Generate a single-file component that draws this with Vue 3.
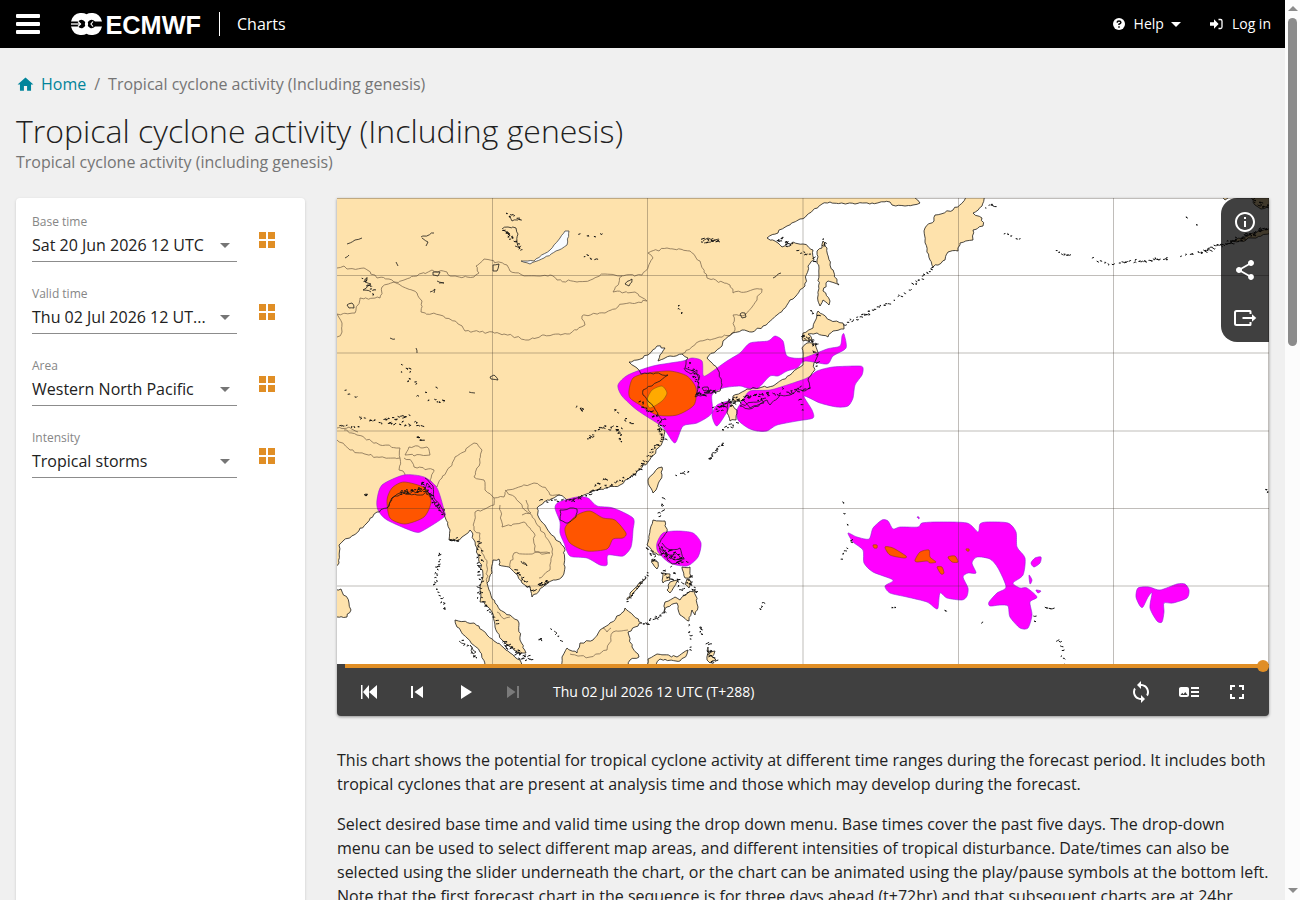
<template>
  <div class="page">
    <div class="main-column">
      <header class="topbar">
        <div class="burger"><i></i><i></i><i></i></div>
        <svg class="logo" viewBox="0 0 131 24">
          <path d="M9 1Q13 .6 15.500 2.200Q18 .6 22 1Q29 1.500 31 9.500H24Q21.500 6.800 18.800 8.300L16.800 10Q17.500 12 16.800 14L18.800 15.700Q21.500 17.200 24 14.500H31Q29 22.500 22 23Q18 23.400 15.500 21.800Q13 23.400 9 23Q2 22.500 0 14.500H7Q9.500 17.200 12.200 15.700L14.200 14Q13.500 12 14.200 10L12.200 8.300Q9.500 6.800 7 9.500H0Q2 1.500 9 1z" fill="#fff" />
          <path d="M0 12h9.500" stroke="#fff" stroke-width="1.300" />
          <path d="M7 9.500L9.500 12 7 14.500M22 9.500L20 12 22 14.500" stroke="#fff" stroke-width="1.200" fill="none" />
          <text x="34.500" y="21.500" textLength="95.500" lengthAdjust="spacingAndGlyphs">ECMWF</text>
        </svg>
        <span class="divider"></span>
        <span class="app-name">Charts</span>
        <div class="spacer"></div>
        <svg class="help-icon" viewBox="0 0 12 12">
          <circle cx="6" cy="6" r="6" fill="#fff" />
          <path d="M4.100 4.600Q4.200 2.900 6 2.900T7.900 4.500Q7.900 5.500 6 6.300V7.100M6 8.200v1.500" fill="none" stroke="#000" stroke-width="1.500" />
        </svg>
        <span class="top-link">Help</span>
        <span class="caret light"></span>
        <svg class="login-icon" viewBox="0 0 13 12">
          <path d="M0 4.200h4V1.200L8.600 6 4 10.800v-3H0z" fill="#fff" />
          <path d="M8.500 1.500h2q1.500 0 1.500 1.500v6q0 1.500-1.500 1.500h-2" fill="none" stroke="#fff" stroke-width="1.300" />
        </svg>
        <span class="top-link">Log in</span>
      </header>

      <nav class="breadcrumb">
        <svg viewBox="0 0 24 24"><path d="M10 20v-6h4v6h5v-8h3L12 3 2 12h3v8z" fill="#00849b" /></svg>
        <a>Home</a><span class="slash">/</span><span>Tropical cyclone activity (Including genesis)</span>
      </nav>
      <h1>Tropical cyclone activity (Including genesis)</h1>
      <p class="subtitle">Tropical cyclone activity (including genesis)</p>

      <div class="content">
        <aside class="filters">
          <div v-for="field in fields" :key="field.label" class="field">
            <div class="select">
              <label>{{ field.label }}</label>
              <div class="value"><span>{{ field.value }}</span><i class="caret"></i></div>
            </div>
            <div class="tiles"><i></i><i></i><i></i><i></i></div>
          </div>
        </aside>

        <section class="chart">
          <div class="viewer">
            <svg class="map" viewBox="0 0 932 466">
              <rect width="932" height="466" fill="#fff" />
              <path class="land" :d="landPath" />
              <path class="water" :d="waterPath" />
              <path class="border" :d="borderPath" />
              <path class="low" :d="lowPath" />
              <path class="mid" :d="midPath" />
              <path class="high" :d="highPath" />
              <path class="coast" :d="landPath" />
              <path class="coast" :d="insetPath" />
              <path class="specks" :d="speckPath" />
              <path class="grid" d="M155.500 0V466M310.500 0V466M466 0V466M621.500 0V466M776.500 0V466M931.500 0V466M0 .5H932M0 77.500H932M0 155H932M0 233H932M0 310.500H932M0 388H932" />
            </svg>
            <div class="map-tools">
              <svg v-for="(icon, i) in mapIcons" :key="i" viewBox="0 0 24 24"><path :d="icon" /></svg>
              <svg viewBox="0 0 24 24">
                <path d="M17.500 8V5.500Q17.500 5 17 5H3.500Q2 5 2 6.500V17.500Q2 19 3.500 19H17q.5 0 .5-.5V16M9.500 12H20" fill="none" stroke="#fff" stroke-width="2" />
                <path d="M19 8.300L23.300 12 19 15.700z" />
              </svg>
            </div>
            <div class="slider"><span class="knob"></span></div>
            <div class="player">
              <svg v-for="(icon, i) in playIcons" :key="i" :class="{ disabled: i === 3 }" viewBox="0 0 24 24"><path :d="icon" /></svg>
              <span class="step">Thu 02 Jul 2026 12 UTC (T+288)</span>
              <div class="spacer"></div>
              <svg v-for="(icon, i) in viewIcons" :key="'v' + i" viewBox="0 0 24 24"><path :d="icon" /></svg>
            </div>
          </div>
          <p>This chart shows the potential for tropical cyclone activity at different time ranges during the forecast period. It includes both tropical cyclones that are present at analysis time and those which may develop during the forecast.</p>
          <p>Select desired base time and valid time using the drop down menu. Base times cover the past five days. The drop-down menu can be used to select different map areas, and different intensities of tropical disturbance. Date/times can also be selected using the slider underneath the chart, or the chart can be animated using the play/pause symbols at the bottom left. Note that the first forecast chart in the sequence is for three days ahead (t+72hr) and that subsequent charts are at 24hr</p>
        </section>
      </div>
    </div>
    <div class="scrollbar"><i class="up"></i><i class="thumb"></i><i class="down"></i></div>
  </div>
</template>

<script setup>
const fields = [
  { label: 'Base time', value: 'Sat 20 Jun 2026 12 UTC' },
  { label: 'Valid time', value: 'Thu 02 Jul 2026 12 UT...' },
  { label: 'Area', value: 'Western North Pacific' },
  { label: 'Intensity', value: 'Tropical storms' }
];

const mapIcons = [
  'M11 7h2v2h-2zm0 4h2v6h-2zm1-9C6.480 2 2 6.480 2 12s4.480 10 10 10 10-4.480 10-10S17.520 2 12 2zm0 18c-4.410 0-8-3.590-8-8s3.590-8 8-8 8 3.590 8 8-3.590 8-8 8z',
  'M18 16.080c-.76 0-1.440.3-1.960.77L8.910 12.700c.05-.23.09-.46.09-.7s-.04-.47-.09-.7l7.050-4.110c.54.5 1.250.81 2.040.81 1.660 0 3-1.340 3-3s-1.340-3-3-3-3 1.340-3 3c0 .24.04.47.09.7L8.040 9.810C7.500 9.310 6.790 9 6 9c-1.660 0-3 1.340-3 3s1.340 3 3 3c.79 0 1.500-.31 2.040-.81l7.120 4.160c-.05.21-.08.43-.08.65 0 1.610 1.310 2.920 2.920 2.920s2.920-1.310 2.920-2.920-1.310-2.920-2.920-2.920z'
];
const playIcons = [
  'M4 5h1.500v14H4zM12 5v14l-6-7zM20 5v14l-8-7z',
  'M6 6h2v12H6zm3.500 6l8.500 6V6z',
  'M8 5v14l11-7z',
  'M6 18l8.500-6L6 6v12zM16 6v12h2V6h-2z'
];
const viewIcons = [
  'M12 4V1L8 5l4 4V6c3.310 0 6 2.690 6 6 0 1.010-.25 1.970-.7 2.800l1.460 1.460C19.540 15.030 20 13.570 20 12c0-4.420-3.580-8-8-8zm0 14c-3.310 0-6-2.690-6-6 0-1.010.25-1.970.7-2.800L5.240 7.740C4.460 8.970 4 10.430 4 12c0 4.420 3.580 8 8 8v3l4-4-4-4v3z',
  'M22 13h-8v-2h8v2zm0-6h-8v2h8V7zm-8 10h8v-2h-8v2zm-2-8v6c0 1.100-.9 2-2 2H4c-1.100 0-2-.9-2-2V9c0-1.100.9-2 2-2h6c1.100 0 2 .9 2 2zm-1.500 6l-2.250-3-1.750 2.260-1.250-1.510L3.500 15h7z',
  'M7 14H5v5h5v-2H7v-3zm-2-4h2V7h3V5H5v5zm12 7h-3v2h5v-5h-2v3zM14 5v2h3v3h2V5h-5z'
];

// Outlines are lists of "x,y" points in map pixels
const land = [
  '-4,-4 578,-4 578,0 583,5 576,7 568,8 555,7 553,4 535,5 518,6 493,4 485,6 470,17 450,28 430,40 441,45 445,49 453,48 456,44 466,46 476,52 477,62 471,68 468,88 456,101 440,117 426,128 415,134 405,132 395,135 386,143 385,148 370,160 381,172 385,187 383,193 366,197 358,199 361,188 362,177 353,172 348,170 351,160 345,156 333,158 321,163 328,150 320,148 311,157 300,162 292,164 300,170 304,176 313,175 331,177 323,183 306,192 306,197 316,208 325,222 321,228 328,233 325,245 311,264 296,277 283,287 260,292 233,302 222,297 207,304 200,310 202,320 213,335 227,349 228,369 225,379 208,387 195,399 193,389 185,385 178,375 172,369 162,367 162,361 156,362 155,375 150,385 152,392 158,405 163,412 173,417 182,425 183,442 189,455 180,454 165,442 158,429 155,414 147,404 143,404 143,389 146,379 142,359 137,342 133,332 128,337 120,343 112,342 113,332 108,319 100,309 92,295 80,297 63,295 55,300 50,310 40,314 30,325 17,337 7,342 2,347 2,365 -4,370',
  '325,269 321,270 311,282 316,295 319,292 325,277',
  '223,312 233,310 240,311 239,319 231,325 223,322',
  '316,322 328,323 330,334 321,347 325,357 316,355 310,347 313,332',
  '315,361 321,364 320,371 316,366',
  '309,380 301,390 290,402 293,395 304,384',
  '326,375 333,376 333,382 326,385',
  '333,384 341,382 333,395 330,392',
  '345,369 353,369 354,379 348,380',
  '350,381 354,384 352,390 348,386',
  '358,392 361,409 358,417 355,412 352,423 343,417 340,405 330,409 327,414 328,404 338,399 343,402 351,395',
  '288,410 305,425 298,429 291,434 295,449 302,459 293,462 291,470 225,470 225,459 230,450 240,455 243,445 256,442 266,430 283,417',
  '310,470 311,461 320,456 340,459 351,452 350,456 343,463 323,461 315,470',
  '371,449 373,455 378,453 375,459 379,462 373,465 370,462',
  '118,422 137,425 150,437 167,450 183,462 187,470 150,470 143,454 130,440 120,429',
  '-4,392 4,391 12,405 14,412 10,419 -4,418',
  '633,-3 616,12 598,17 597,23 588,30 588,43 593,62 596,69 608,62 611,54 621,53 623,45 636,42 636,32 646,28 645,20 636,15 645,8 648,-3',
  '486,43 490,50 493,67 502,87 491,83 486,93 493,103 492,107 486,102 483,108 481,103 482,70 480,62 480,53 485,50',
  '481,113 493,122 506,125 507,131 496,133 491,139 480,135 471,136 475,142 466,143 466,135 476,130',
  '470,145 478,146 481,157 477,165 477,173 471,182 473,190 468,193 460,192 453,197 443,197 433,207 430,202 413,210 406,202 395,203 396,198 410,191 436,188 453,177 466,167 466,160 465,150',
  '391,203 400,212 399,222 393,223 390,215',
  '403,208 425,202 427,205 412,211',
  '365,190 371,189 372,193 367,193',
  '884,-3 888,2 893,-2',
  '914,-3 918,7 924,11 930,9 936,9 936,-3',
  '893,43 910,38 920,34 936,29 936,34 915,40 900,44'
];
const water = [
  '184,63 197,63 213,52 223,40 228,33 232,33 230,47 222,52 207,60 193,66'
];
const borders = [
  '0,70 7,68 10,71 27,70 40,80 52,81 57,84 67,82 80,78 95,72 110,74 113,78 137,79 142,75 139,68 147,61 170,67 173,73 185,77 213,77 220,82 240,84 256,81 268,76 283,78 305,77 316,60 311,55 330,50 353,53 363,63 370,80 393,87 396,95 425,91 420,102 408,117 396,117 398,132 395,136 373,142 363,143 345,156',
  '57,84 80,95 85,103 84,114 103,117 118,123 128,133 167,136 192,142 207,137 230,136 248,127 245,118 268,115 286,106 310,103 298,94 276,94 285,78',
  '57,84 45,89 43,100 23,100 18,115 0,116 5,125 5,134 0,139',
  '0,242 13,252 40,259 63,260 63,250 43,247 20,237 7,232',
  '63,260 62,272 68,276 70,292',
  '67,260 75,264 77,269 97,272 93,282 100,289 105,280 113,269 118,259 137,245 145,252 143,265 137,279 147,282 148,292 157,300 157,307 138,314 137,332 143,335 142,349 150,365 150,385',
  '157,300 167,299 170,292 197,285 210,292 213,297 223,297',
  '163,307 165,329 187,324 197,335 198,354 213,355',
  '168,292 182,304 192,315 203,329 213,345 215,354 213,372 202,380',
  '213,355 177,355 173,369',
  '68,257 72,249 90,249 93,257 68,257',
  '189,302 194,315 185,317',
  '233,456 253,459 270,452 276,434 291,432',
  '160,414 167,421 173,419',
  '266,430 270,434 274,430',
  '0,230 12,229 21,234'
];
const low = [
  '281,187 291,177 316,168 346,163 355,160 365,163 366,177 370,177 390,163 403,155 413,145 431,143 438,138 446,143 450,158 466,160 490,151 503,148 505,138 507,136 509,150 496,158 490,166 468,163 460,170 450,173 441,178 433,178 421,190 410,190 403,188 386,190 375,197 375,215 360,225 346,228 338,245 328,232 323,227 300,212 285,198',
  '406,202 413,193 433,192 453,186 470,180 480,173 496,169 522,168 526,170 525,177 518,187 516,200 511,208 500,209 483,205 467,198 475,212 476,220 460,223 440,227 430,233 420,233 411,230 401,222 400,212',
  '375,217 380,207 393,203 391,212 380,228',
  '40,302 45,287 67,277 87,279 100,290 107,312 107,319 87,332 78,334 50,322 41,312',
  '218,310 222,304 240,299 251,300 260,308 276,310 296,320 296,332 294,349 286,358 271,357 270,367 263,367 250,360 233,358 227,345 223,335 223,324',
  '320,345 326,335 340,333 356,335 364,345 361,359 350,368 333,365 321,354',
  '511,335 520,339 532,341 536,330 545,322 551,323 556,331 563,329 581,329 585,325 600,324 630,325 641,334 643,326 650,324 671,325 679,334 680,349 688,360 686,377 676,385 683,390 690,390 700,399 693,404 695,417 691,430 683,430 673,419 671,408 663,407 653,408 652,404 660,395 669,389 661,370 653,361 640,359 635,365 639,375 631,375 626,379 631,390 630,398 625,402 610,400 603,395 601,410 598,410 590,404 570,399 553,395 548,388 556,382 536,374 527,365 526,352 516,344',
  '694,365 698,360 704,359 703,365 697,369',
  '692,377 695,382 693,386',
  '699,392 704,393 701,395',
  '799,399 801,390 812,389 823,392 840,386 848,386 852,392 850,400 836,405 827,405 827,414 825,424 820,423 813,410 815,395 811,399 806,409 803,408',
  '580,319 582,319 582,321'
];
const mid = [
  '50,302 55,290 67,284 88,290 94,304 87,319 68,326 53,320',
  '228,330 240,317 253,313 266,320 278,322 289,335 286,340 276,341 270,351 250,353 233,345',
  '292,192 296,180 310,175 333,173 350,178 359,190 357,207 340,217 320,217 303,207 293,200',
  '548,349 556,350 569,358 567,360 553,357',
  '578,362 583,354 592,352 593,359 599,364 593,365 590,363 580,364',
  '611,359 618,358 621,364 615,364',
  '600,369 605,369 607,375 604,376',
  '536,347 540,347 540,350 537,350',
  '629,351 632,351 632,353 630,353'
];
const high = ['310,202 315,192 325,188 330,195 325,203 313,210'];

// Coastlines that stay visible inside the shaded areas, and small lakes
const insets = [
  '172,18 175,23 181,22|165,31 171,29 179,30 181,36 180,44 183,50 178,48',
  '166,32 171,34 173,38 169,34|10,46 18,42 25,40|8,60 12,57|84,39 97,35|85,40 91,44 89,48',
  '30,79 28,84 34,86 26,92 34,94|59,64 61,68|156,67 162,66 160,73 156,73 156,67',
  '96,74 103,74 101,78 96,77 96,74|100,83 107,85 102,85|93,94 98,91 97,95|10,107 15,105 17,110 12,110 10,107',
  '153,179 157,177 161,182 154,181 153,179|79,150 80,155|53,140 58,141|132,194 138,195',
  '366,43 371,40 376,43 382,41|367,45 374,44',
  '288,86 295,81 292,88 288,86|403,116 408,115 409,119 405,120 403,116|436,80 444,75',
  '63,295 65,292 67,296 70,291 72,296 76,293 79,295 82,289 84,294 88,291 90,285 95,291',
  '88,280 93,285 96,288 97,300 104,309 108,317|50,310 55,300 64,296',
  '325,345 333,352 343,350 347,360 338,362 330,356 325,350|322,350 335,366 345,363 338,354',
  '347,170 354,176 360,172 362,182',
  '184,363 190,368 186,364|133,447 139,454 136,456 133,447|122,443 128,446|217,433 220,435 218,437'
];

let seed = 7;
const rand = () => {
  seed = (seed * 16807) % 2147483647;
  return seed / 2147483647 - 0.5;
};

const parse = (text) => text.split(' ').map(p => p.split(',').map(Number));

// Breaks straight runs into short uneven pieces
const rough = (text, amp, closed) => {
  const pts = parse(text);
  if (closed) pts.push(pts[0]);
  let d = `M${pts[0]}`;
  for (let i = 1; i < pts.length; i++) {
    const [ax, ay] = pts[i - 1];
    const [bx, by] = pts[i];
    const n = Math.max(1, Math.min(30, Math.round(Math.hypot(bx - ax, by - ay) / 3)));
    for (let k = 1; k <= n; k++) {
      const j = k === n ? 0 : amp;
      const x = ax + (bx - ax) * k / n + rand() * j;
      const y = ay + (by - ay) * k / n + rand() * j;
      d += `L${x.toFixed(1)} ${y.toFixed(1)}`;
    }
  }
  return d + (closed ? 'Z' : '');
};

// Closed curve through all points
const smooth = (text) => {
  const p = parse(text);
  const n = p.length;
  let d = `M${p[0]}`;
  for (let i = 0; i < n; i++) {
    const a = p[(i + n - 1) % n], b = p[i], c = p[(i + 1) % n], e = p[(i + 2) % n];
    d += `C${b[0] + (c[0] - a[0]) / 8} ${b[1] + (c[1] - a[1]) / 8} ${c[0] - (e[0] - b[0]) / 8} ${c[1] - (e[1] - b[1]) / 8} ${c}`;
  }
  return d + 'Z';
};

const landPath = land.map(t => rough(t, 2, true)).join('');
const waterPath = water.map(t => rough(t, 1, true)).join('');
const borderPath = borders.map(t => rough(t, 2.4, false)).join('');
const insetPath = insets.flatMap(t => t.split('|')).map(t => rough(t, 1.8, false)).join('');
const lowPath = low.map(smooth).join('');
const midPath = mid.map(smooth).join('');
const highPath = high.map(smooth).join('');

// Island chains and lake groups: x1, y1, x2, y2, count, spread
const chains = [
  [508, 125, 535, 113, 14, 3], [538, 111, 550, 106, 6, 2], [557, 102, 571, 93, 5, 2], [575, 87, 595, 70, 11, 3],
  [649, 9, 657, 7, 5, 3], [666, 36, 684, 42, 5, 2], [718, 53, 731, 58, 6, 2], [755, 61, 773, 66, 6, 3], [784, 65, 830, 60, 20, 3],
  [843, 58, 870, 52, 7, 2], [863, 54, 893, 43, 20, 4], [893, 43, 931, 30, 34, 5], [851, 21, 858, 26, 2, 1], [915, 3, 931, 10, 12, 5],
  [325, 240, 296, 277, 22, 3], [296, 277, 235, 302, 26, 3], [235, 302, 205, 303, 9, 3], [302, 205, 327, 226, 20, 5], [320, 230, 326, 240, 8, 5],
  [358, 197, 378, 193, 22, 4], [352, 168, 361, 188, 14, 4], [378, 212, 397, 202, 26, 7], [395, 203, 432, 197, 32, 7], [436, 195, 470, 190, 16, 5],
  [385, 231, 400, 225, 7, 4], [371, 261, 385, 245, 14, 3], [339, 277, 351, 273, 5, 1], [324, 302, 322, 320, 6, 4],
  [324, 353, 346, 364, 28, 9], [325, 370, 350, 392, 22, 12], [352, 378, 358, 395, 11, 5], [305, 427, 328, 415, 14, 3], [311, 374, 290, 402, 12, 2],
  [310, 350, 318, 365, 10, 5], [352, 428, 353, 452, 6, 2], [362, 429, 364, 436, 5, 2], [371, 448, 376, 466, 14, 6], [423, 411, 425, 406, 3, 1],
  [102, 355, 97, 386, 16, 3], [99, 392, 107, 412, 8, 4], [142, 345, 142, 400, 28, 5], [145, 405, 160, 425, 9, 3], [165, 445, 192, 463, 32, 6],
  [176, 372, 195, 392, 12, 3], [200, 388, 210, 383, 12, 3], [63, 295, 90, 292, 18, 4], [83, 282, 106, 315, 22, 5], [112, 342, 120, 341, 7, 3],
  [125, 444, 140, 462, 7, 4], [200, 442, 204, 441, 3, 2], [215, 433, 223, 443, 3, 3],
  [62, 170, 102, 205, 18, 20], [22, 220, 85, 228, 22, 6], [50, 220, 70, 219, 10, 5], [8, 193, 18, 200, 3, 3], [0, 228, 20, 230, 6, 3],
  [242, 35, 260, 37, 4, 4], [245, 57, 256, 60, 4, 3], [365, 43, 381, 42, 12, 4], [441, 40, 452, 48, 14, 6], [462, 50, 477, 65, 9, 8],
  [340, 108, 345, 114, 3, 3], [240, 210, 246, 212, 5, 3], [261, 230, 284, 230, 12, 5], [276, 216, 296, 224, 6, 7], [249, 240, 258, 234, 6, 4], [280, 232, 283, 242, 8, 3], [260, 287, 268, 280, 6, 4],
  [465, 138, 478, 147, 16, 6], [476, 152, 480, 170, 6, 3], [461, 195, 466, 215, 4, 3], [486, 43, 487, 49, 5, 3], [475, 113, 478, 116, 3, 3],
  [505, 306, 512, 340, 4, 2], [503, 361, 512, 346, 5, 2], [707, 410, 713, 411, 4, 2], [720, 442, 727, 464, 7, 3], [555, 409, 559, 409, 2, 1], [607, 412, 608, 413, 2, 1], [644, 425, 645, 425, 1, 1],
  [930, 293, 931, 296, 2, 2], [696, 418, 697, 422, 2, 1], [79, 240, 84, 242, 5, 3], [26, 297, 30, 298, 3, 1], [170, 16, 181, 22, 6, 3], [167, 31, 183, 52, 14, 4], [26, 80, 34, 95, 10, 5]
];
const speckPath = chains.map(([x1, y1, x2, y2, count, spread]) => {
  let d = '';
  for (let i = 0; i < count; i++) {
    const t = count > 1 ? (i + rand() * 0.9) / (count - 1) : 0;
    const x = x1 + (x2 - x1) * t + rand() * spread;
    const y = y1 + (y2 - y1) * t + rand() * spread;
    d += `M${x.toFixed(1)} ${y.toFixed(1)}l${(1.6 + rand()).toFixed(1)} ${(rand() * 2).toFixed(1)}l${(rand() * 4).toFixed(1)} ${(rand() * 2.4).toFixed(1)}`;
  }
  return d;
}).join('');
</script>

<style>
body {
  margin: 0;
  background: #f0f0f0;
}
</style>

<style scoped>
.page {
  display: flex;
  height: 900px;
  overflow: hidden;
  background: #f0f0f0;
  color: #212121;
  font: 16px/24px "Open Sans", "Noto Sans", sans-serif;
}

.main-column {
  width: 1285px;
  height: 900px;
  overflow: hidden;
}

.topbar {
  display: flex;
  align-items: center;
  height: 48px;
  padding: 0 14px 0 16px;
  box-sizing: border-box;
  background: #000;
  color: #fff;
}

.burger {
  display: flex;
  flex-direction: column;
  gap: 4px;
  width: 24px;
  margin-right: 31px;
}

.burger i {
  height: 4px;
  border-radius: 1px;
  background: #fff;
}

.logo {
  width: 131px;
  height: 24px;
}

.logo text {
  font: bold 26.5px "Liberation Sans", sans-serif;
  fill: #fff;
}

.divider {
  width: 1px;
  height: 24px;
  margin: 0 17px 0 17px;
  background: #fff;
}

.spacer {
  flex-grow: 1;
}

.help-icon {
  width: 12px;
  height: 12px;
  margin-right: 9px;
}

.top-link {
  font-size: 14px;
}

.caret {
  border: 5px solid transparent;
  border-top-color: #757575;
  border-bottom: 0;
}

.caret.light {
  margin: 0 29px 0 7px;
  border-top-color: #fff;
}

.login-icon {
  width: 13px;
  height: 12px;
  margin-right: 9px;
}

.breadcrumb {
  display: flex;
  align-items: center;
  height: 24px;
  margin: 24px 16px 0;
  color: #757575;
}

.breadcrumb svg {
  width: 19px;
  height: 19px;
  margin-right: 6px;
}

.breadcrumb a {
  color: #00849b;
}

.slash {
  margin: 0 8px;
}

h1 {
  margin: 15px 16px 0;
  font-size: 32px;
  font-weight: 300;
  line-height: 40px;
}

.subtitle {
  margin: -1px 16px 0;
  color: #757575;
}

.content {
  display: flex;
  gap: 32px;
  margin: 24px 16px 0;
}

.filters {
  width: 289px;
  height: 720px;
  padding: 16px;
  box-sizing: border-box;
  border-radius: 4px;
  background: #fff;
  box-shadow: 0 1px 3px rgba(0, 0, 0, 0.16);
}

.field {
  display: flex;
  gap: 22px;
  height: 72px;
}

.select {
  width: 205px;
  height: 48px;
  border-bottom: 1px solid #8c8c8c;
  box-sizing: border-box;
}

.select label {
  display: block;
  height: 19px;
  padding-top: 0;
  color: #868686;
  font-size: 12px;
  line-height: 16px;
}

.value {
  display: flex;
  align-items: center;
  justify-content: space-between;
  padding-right: 7px;
  white-space: nowrap;
}

.tiles {
  display: grid;
  grid-template-columns: 7px 7px;
  grid-template-rows: 7px 7px;
  gap: 2px;
  margin-top: 18px;
}

.tiles i {
  background: #e08e25;
}

.chart {
  width: 932px;
}

.viewer {
  position: relative;
  height: 518px;
  overflow: hidden;
  margin-bottom: 32px;
  border-radius: 0 0 4px 4px;
  background: #404040;
  box-shadow: 0 1px 3px rgba(0, 0, 0, 0.4);
}

.map {
  display: block;
  width: 932px;
  height: 466px;
}

.land {
  fill: #fee2ac;
}

.water {
  fill: #f8fbff;
  stroke: #444;
  stroke-width: 0.8;
}

.border {
  fill: none;
  stroke: #806c52;
  stroke-width: 0.8;
}

.low {
  fill: #ff00ff;
  stroke: #8d20d8;
  stroke-width: 0.6;
}

.mid {
  fill: #ff5500;
  stroke: #8d3a10;
  stroke-width: 0.6;
}

.high {
  fill: #ffaa00;
  stroke: #8d5010;
  stroke-width: 0.6;
}

.coast {
  fill: none;
  stroke: #1c1a18;
  stroke-width: 0.8;
}

.specks {
  fill: none;
  stroke: #111;
  stroke-width: 1;
}

.grid {
  stroke: rgba(60, 50, 40, 0.32);
  stroke-width: 1;
}

.map-tools {
  position: absolute;
  top: 0;
  right: 0;
  display: flex;
  flex-direction: column;
  gap: 24px;
  padding: 12px;
  border-radius: 16px 0 0 16px;
  background: rgba(0, 0, 0, 0.75);
}

.map-tools svg,
.player svg {
  width: 24px;
  height: 24px;
  fill: #fff;
}

.slider {
  position: absolute;
  top: 466px;
  left: 8px;
  right: 6px;
  height: 4px;
  background: #e08e25;
}

.knob {
  position: absolute;
  top: -4px;
  right: -6px;
  width: 12px;
  height: 12px;
  border-radius: 50%;
  background: #e08e25;
}

.player {
  display: flex;
  align-items: center;
  gap: 24px;
  height: 48px;
  padding: 4px 20px 0;
  color: #fff;
}

.player .disabled {
  opacity: 0.3;
}

.step {
  margin-left: 4px;
  font-size: 14px;
}

.chart p {
  margin: 0 0 16px;
}

.scrollbar {
  display: flex;
  flex-direction: column;
  align-items: center;
  width: 15px;
  height: 900px;
  background: #fcfcfc;
}

.scrollbar .up {
  margin-top: 6px;
  border: 5px solid transparent;
  border-top: 0;
  border-bottom-color: #8b8b8b;
}

.scrollbar .thumb {
  width: 9px;
  height: 328px;
  margin-top: 7px;
  border-radius: 5px;
  background: #8b8b8b;
}

.scrollbar .down {
  margin-top: auto;
  margin-bottom: 7px;
  border: 5px solid transparent;
  border-bottom: 0;
  border-top-color: #8b8b8b;
}
</style>
